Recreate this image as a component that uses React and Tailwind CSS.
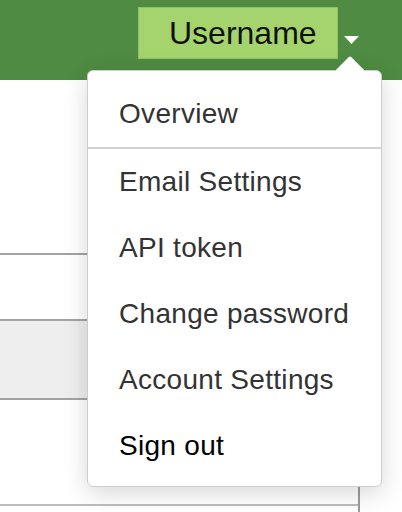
import React from "react";

const items = [
  { label: "Email Settings", cls: "text-[#333333]" },
  { label: "API token", cls: "text-[#333333]" },
  { label: "Change password", cls: "text-[#333333]" },
  { label: "Account Settings", cls: "text-[#333333]" },
  { label: "Sign out", cls: "text-black" },
];

export default function App() {
  return (
    <div
      className="relative w-[402px] h-[512px] overflow-hidden bg-white"
      style={{ fontFamily: '"Liberation Sans", Arial, sans-serif' }}
    >
      {/* Header */}
      <div className="h-[80px] bg-[#4f8b42] flex justify-end items-start pt-[7px] pr-[43px] gap-[6px]">
        <div className="h-[52px] w-[200px] bg-[#a5d46f] border border-[#8fc35e] flex items-center pl-[30px] text-[32px] text-[#111111]">
          Username
        </div>
        <svg width="15" height="8" viewBox="0 0 15 8" className="mt-[29px]">
          <polygon points="0,0 15,0 7.5,8" fill="#ffffff" />
        </svg>
      </div>

      {/* Background table */}
      <div className="w-[360px] border-r-2 border-[#9c9c9c] flex flex-col">
        <div className="h-[173px]" />
        <div className="h-[2px] bg-[#a3a3a3]" />
        <div className="h-[64px]" />
        <div className="h-[2px] bg-[#a3a3a3]" />
        <div className="h-[77px] bg-[#eeeeee]" />
        <div className="h-[2px] bg-[#a3a3a3]" />
        <div className="h-[104px]" />
        <div className="h-[2px] bg-[#bdbdbd]" />
        <div className="h-[20px]" />
      </div>

      {/* Dropdown menu */}
      <div className="absolute left-[87px] top-[70px] w-[295px] h-[417px] bg-white rounded-[6px] border border-[#cdcdcd] shadow-[0_6px_24px_rgba(0,0,0,0.16)] flex flex-col pt-[10px] text-[28px] tracking-[0.3px]">
        <div className="h-[66px] flex items-center pl-[31px] text-[#333333]">
          Overview
        </div>
        <div className="h-[2px] bg-[#d2d2d2]" />
        {items.map((it) => (
          <div
            key={it.label}
            className={`h-[66px] flex items-center pl-[31px] ${it.cls}`}
          >
            {it.label}
          </div>
        ))}
      </div>
      {/* Menu arrow */}
      <div className="absolute left-[340px] top-[60px] w-[20px] h-[20px] bg-white rotate-45 rounded-tl-[2px]" />
    </div>
  );
}
